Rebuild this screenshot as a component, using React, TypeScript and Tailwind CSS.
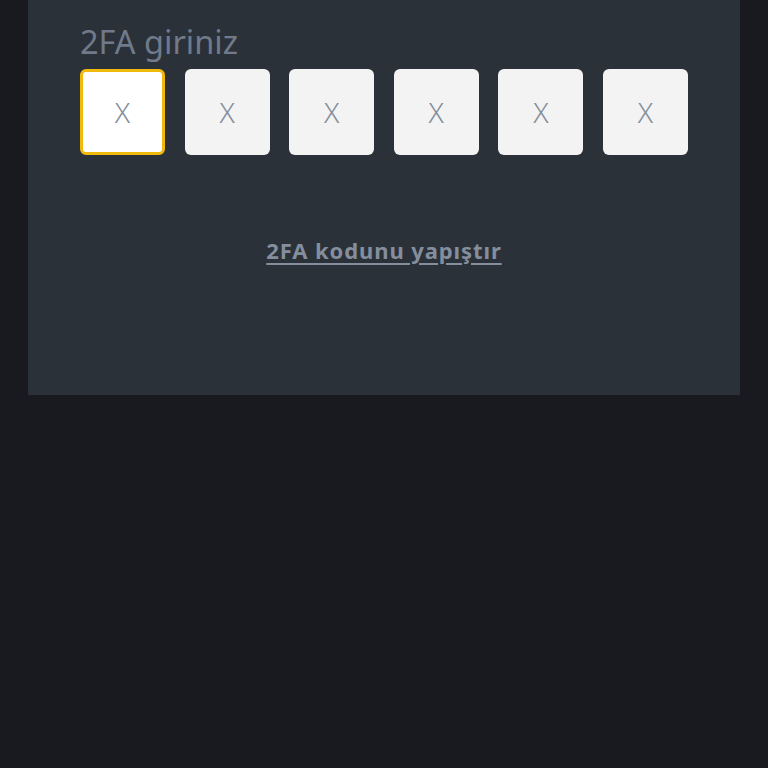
const digits = ["X", "X", "X", "X", "X", "X"];

export default function App() {
  return (
    <div
      className="min-h-screen w-full bg-[#181a20] px-[28px]"
      style={{ fontFamily: '"Noto Sans", "Liberation Sans", sans-serif' }}
    >
      <div className="h-[395px] w-[712px] bg-[#2b3139] px-[52px] pt-[22px]">
        <h2 className="text-[32.5px] leading-[40px] font-normal text-[#707a8a]">2FA giriniz</h2>

        <div className="mt-[7px] flex justify-between">
          {digits.map((d, i) => (
            <div
              key={i}
              className={`flex h-[86px] w-[85px] items-center justify-center rounded-[6px] text-[28px] font-light text-[#848e9c] ${i === 0 ? "border-[3px] border-[#f0b90b] bg-white" : "bg-[#f3f3f3]"}`}
            >
              {d}
            </div>
          ))}
        </div>

        <div className="mt-[80px] flex justify-center">
          <button className="text-[22px] font-bold leading-[30px] tracking-[0.9px] text-[#848e9c] underline underline-offset-[4px]">
            2FA kodunu yapıştır
          </button>
        </div>
      </div>
    </div>
  );
}
